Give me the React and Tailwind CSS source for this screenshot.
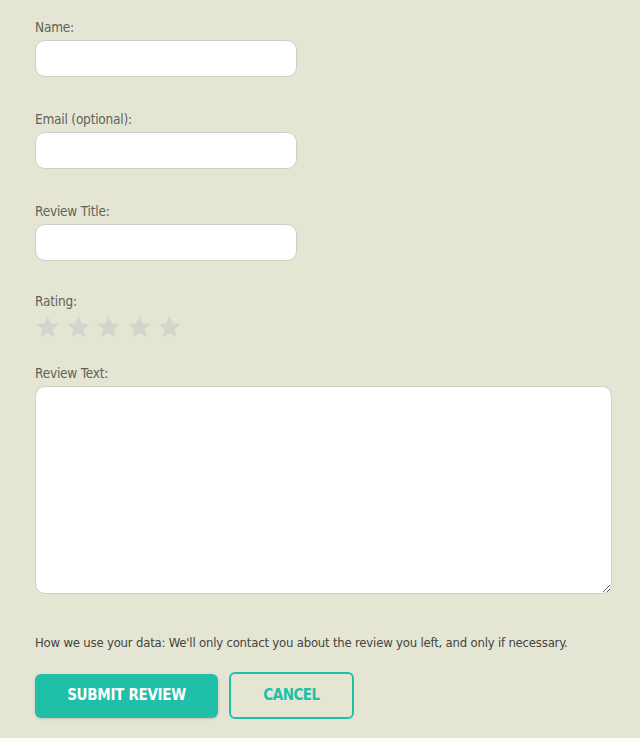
import React from 'react';

const font = { fontFamily: '"DejaVu Sans Condensed", "DejaVu Sans", sans-serif' };

function Field({ label, children }) {
  return (
    <div className="flex flex-col">
      <label className="text-[13.5px] leading-[20px] text-[#62625c] mb-[3px] tracking-[-0.2px]">{label}</label>
      {children}
    </div>
  );
}

function Star() {
  return (
    <svg width="27" height="26" viewBox="0 0 24 24" className="fill-[#d3d4cc]">
      <polygon points="12,1.5 14.9,8.7 22.6,9.2 16.7,14.1 18.6,21.6 12,17.5 5.4,21.6 7.3,14.1 1.4,9.2 9.1,8.7" />
    </svg>
  );
}

export default function App() {
  return (
    <div className="min-h-screen bg-[#e4e6d3] pl-[35px] pt-[17px] font-stretch-condensed" style={font}>
      <div className="w-[577px] flex flex-col">
        <Field label="Name:">
          <input className="w-[262px] h-[37px] bg-white border border-[#cfcfc8] rounded-[10px]" />
        </Field>
        <div className="h-[32px]" />
        <Field label="Email (optional):">
          <input className="w-[262px] h-[37px] bg-white border border-[#cfcfc8] rounded-[10px]" />
        </Field>
        <div className="h-[32px]" />
        <Field label="Review Title:">
          <input className="w-[262px] h-[37px] bg-white border border-[#cfcfc8] rounded-[10px]" />
        </Field>
        <div className="h-[30px]" />
        <Field label="Rating:">
          <div className="flex gap-[3.5px] -ml-[1px]">
            <Star /><Star /><Star /><Star /><Star />
          </div>
        </Field>
        <div className="h-[23px]" />
        <Field label="Review Text:">
          <textarea className="w-[577px] h-[208px] bg-white border border-[#cfcfc8] rounded-[10px]" />
        </Field>
        <p className="mt-[39px] text-[13px] leading-[20px] text-[#444440] whitespace-nowrap tracking-[-0.2px]">
          How we use your data: We'll only contact you about the review you left, and only if necessary.
        </p>
        <div className="flex gap-[11px] mt-[19px] items-center">
          <button className="w-[183px] h-[44px] bg-[#20c0a8] text-white text-[15px] font-bold rounded-[6px] shadow-[0_1px_3px_rgba(0,0,0,0.15)] tracking-[-0.3px]">
            SUBMIT REVIEW
          </button>
          <button className="w-[125px] h-[47px] border-2 border-[#20c0a8] text-[#20c0a8] text-[15px] font-bold rounded-[6px] tracking-[-0.5px]">
            CANCEL
          </button>
        </div>
      </div>
    </div>
  );
}
